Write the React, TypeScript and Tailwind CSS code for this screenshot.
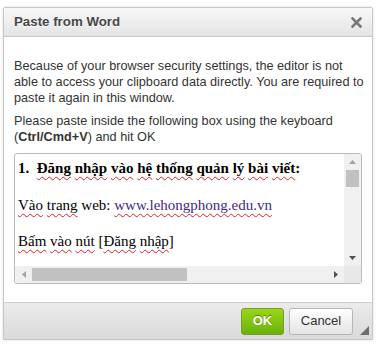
import React from "react";

const sq = "underline decoration-wavy decoration-[#e02020] decoration-1 underline-offset-[3px]";

function VScrollbar() {
  return (
    <div className="flex w-[17px] flex-col items-center bg-[#f0f0f0]">
      <div className="flex h-[16px] w-full items-center justify-center">
        <svg width="7" height="4" viewBox="0 0 7 4"><path d="M0 4 L3.5 0 L7 4 Z" fill="#a3a3a3" /></svg>
      </div>
      <div className="h-[17px] w-[13px] bg-[#c1c1c1]" />
      <div className="flex-1" />
      <div className="flex h-[16px] w-full items-center justify-center">
        <svg width="7" height="4" viewBox="0 0 7 4"><path d="M0 0 L3.5 4 L7 0 Z" fill="#505050" /></svg>
      </div>
    </div>
  );
}

function HScrollbar() {
  return (
    <div className="flex h-[17px] items-center bg-[#f0f0f0]">
      <div className="flex h-full w-[17px] items-center justify-center">
        <svg width="4" height="7" viewBox="0 0 4 7"><path d="M4 0 L0 3.5 L4 7 Z" fill="#a3a3a3" /></svg>
      </div>
      <div className="h-[13px] w-[155px] bg-[#c1c1c1]" />
      <div className="flex-1" />
      <div className="flex h-full w-[17px] items-center justify-center">
        <svg width="4" height="7" viewBox="0 0 4 7"><path d="M0 0 L4 3.5 L0 7 Z" fill="#505050" /></svg>
      </div>
      <div className="h-full w-[17px] bg-[#e8e8e8]" />
    </div>
  );
}

export default function App() {
  return (
    <div className="h-[344px] w-[379px] bg-white pl-[3px] pt-[7px] font-['Liberation_Sans',Arial,sans-serif]">
      <div className="w-[370px] rounded-t-[2px] border border-[#c8c8c8] shadow-[0_0_3px_rgba(0,0,0,0.15)]">
        {/* header */}
        <div className="flex h-[29px] items-center justify-between border-b border-[#c8c8c8] bg-gradient-to-b from-[#f8f8f8] to-[#e4e4e4] pl-[10px] pr-[10px]">
          <span className="text-[13.3px] font-bold text-[#474747] [text-shadow:0_1px_0_#fff]">Paste from Word</span>
          <svg width="11" height="11" viewBox="0 0 11 11">
            <path d="M1.5 1.5 L9.5 9.5 M9.5 1.5 L1.5 9.5" stroke="#787878" strokeWidth="2.6" strokeLinecap="square" />
          </svg>
        </div>

        {/* body */}
        <div className="bg-white px-[10px] pb-[18px] pt-[21px] text-[12.7px] leading-[16px] text-[#333]">
          <p className="w-[348px] whitespace-nowrap">
            Because of your browser security settings, the editor is not<br />
            able to access your clipboard data directly. You are required to<br />
            paste it again in this window.
          </p>
          <p className="mt-[7px] w-[348px] whitespace-nowrap">
            Please paste inside the following box using the keyboard<br />
            (<b>Ctrl/Cmd+V</b>) and hit OK
          </p>

          <div className="mt-[8px] h-[131px] w-[348px] overflow-hidden rounded-[3px] border border-[#bcbcbc] bg-white">
            <div className="flex h-[112px]">
              <div className="flex-1 overflow-hidden pl-[3px] pt-[5px] font-['Liberation_Serif','Times_New_Roman',serif] text-[15px] leading-[18px] text-black">
                <p className="whitespace-nowrap font-bold">
                  1.&nbsp;&nbsp;<span className={sq}>Đăng</span> <span className={sq}>nhập</span> <span className={sq}>vào</span> <span className={sq}>hệ</span> <span className={sq}>thống</span> <span className={sq}>quản</span> <span className={sq}>lý</span> <span className={sq}>bài</span> <span className={sq}>viết</span>:
                </p>
                <p className="mt-[19px] whitespace-nowrap">
                  <span className={sq}>Vào</span> <span className={sq}>trang</span> web: <span className="text-[#3f2a8a] underline decoration-wavy decoration-[#e02020] decoration-1 underline-offset-[3px]">www.lehongphong.edu.vn</span>
                </p>
                <p className="mt-[18px] whitespace-nowrap">
                  <span className={sq}>Bấm</span> <span className={sq}>vào</span> <span className={sq}>nút</span> [<span className={sq}>Đăng</span> <span className={sq}>nhập</span>]
                </p>
              </div>
              <VScrollbar />
            </div>
            <HScrollbar />
          </div>
        </div>

        {/* footer */}
        <div className="relative flex h-[37px] items-center justify-end gap-[5px] border-t border-[#cfcfcf] bg-gradient-to-b from-[#ebebeb] to-[#dadada] pr-[19px]">
          <button className="flex h-[27px] w-[43px] items-center justify-center rounded-[3px] border border-[#7a9c2f] bg-gradient-to-b from-[#9ad717] to-[#69b10b] text-[13px] font-bold text-white [text-shadow:0_-1px_0_#55830c]">
            OK
          </button>
          <button className="flex h-[27px] w-[64px] items-center justify-center rounded-[3px] border border-[#b6b6b6] bg-gradient-to-b from-white to-[#e4e4e4] text-[13px] text-[#333]">
            Cancel
          </button>
          <svg className="absolute bottom-[4px] right-[3px]" width="9" height="9" viewBox="0 0 9 9">
            <path d="M9 0 L9 9 L0 9 Z" fill="#6f6f6f" />
          </svg>
        </div>
      </div>
    </div>
  );
}
